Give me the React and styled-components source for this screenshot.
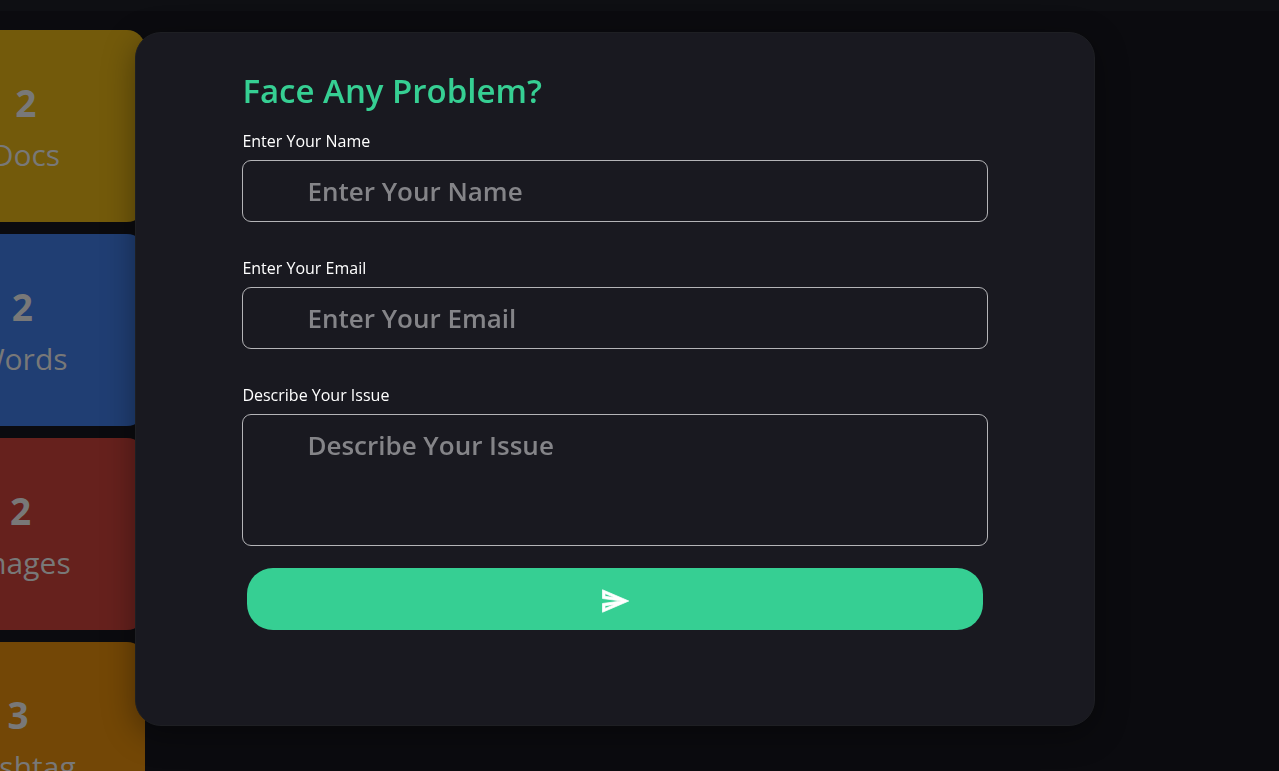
import React from "react";
import styled, { createGlobalStyle } from "styled-components";
import {
  MdOutlineDescription,
  MdOutlineTextFields,
  MdOutlineImage,
  MdOutlineTag,
} from "react-icons/md";

const GlobalStyle = createGlobalStyle`
  *, *::before, *::after { box-sizing: border-box; }
  body {
    margin: 0;
    background: #0b0b0f;
    font-family: "Segoe UI", "Open Sans", "Noto Sans", sans-serif;
    color: #ffffff;
  }
  h2, p { margin: 0; }
`;

const Dashboard = styled.div`
  height: 100vh;
  overflow: hidden;
`;

const TopBar = styled.header`
  height: 11px;
  background: #0e0f13;
`;

const CardList = styled.section`
  display: flex;
  flex-direction: column;
  gap: 12px;
  width: 400px;
  margin: 19px 0 0 -255px;
`;

const StatCard = styled.article`
  display: flex;
  align-items: center;
  justify-content: space-evenly;
  height: 192px;
  flex-shrink: 0;
  padding-top: 6px;
  border-radius: 18px;
  background: ${({ $color }) => $color};
  color: #787878;
  text-align: center;

  svg { flex-shrink: 0; }
`;

const StatValue = styled.p`
  font-size: 37px;
  font-weight: 700;
  line-height: 52px;
`;

const StatName = styled.p`
  font-size: 30px;
  line-height: 52px;
`;

const Overlay = styled.div`
  position: fixed;
  inset: 0;
  display: flex;
  justify-content: center;
  align-items: flex-start;
  padding: 32px 49px 0 0;
`;

const Modal = styled.div`
  width: 75vw;
  min-height: 90vh;
  padding: 34px 106px;
  border: 1px solid #1e1f23;
  border-radius: 26px;
  background: #191920;
  box-shadow: 0 8px 32px rgba(0, 0, 0, 0.37);
`;

const Title = styled.h2`
  margin-bottom: 14px;
  color: #36cf93;
  font-size: 33px;
  font-weight: 600;
  line-height: 48px;
`;

const Form = styled.form`
  display: flex;
  flex-direction: column;
`;

const Field = styled.div`
  display: flex;
  flex-direction: column;
  gap: 7px;
  margin-bottom: ${({ $last }) => ($last ? "22px" : "34px")};
`;

const Label = styled.label`
  font-size: 16px;
  line-height: 24px;
`;

const TextInput = styled.input`
  width: 100%;
  height: ${({ $height }) => $height || "62px"};
  padding: 10px 64px;
  border: 1px solid #b4b4b7;
  border-radius: 9px;
  outline: none;
  background: transparent;
  color: #ffffff;
  font-family: inherit;
  font-size: 26px;
  font-weight: 600;
  line-height: 40px;
  resize: none;

  &::placeholder {
    color: #848488;
    opacity: 1;
  }
`;

const SendButton = styled.button`
  display: flex;
  align-items: center;
  justify-content: center;
  height: 62px;
  margin: 0 5px;
  padding: 4px 0 0;
  border: 0;
  border-radius: 26px;
  background: #36cf93;
  color: #ffffff;
  cursor: pointer;
`;

const SendIcon = () => (
  <svg
    width="30"
    height="30"
    viewBox="0 0 24 24"
    fill="currentColor"
    stroke="currentColor"
    strokeWidth="0.6"
    aria-hidden="true"
  >
    <path d="M4.01 6.03l7.51 3.22-7.52-1 .01-2.22m7.5 8.72L4 17.97v-2.22l7.51-1M2.01 3L2 10l15 2-15 2 .01 7L23 12 2.01 3z" />
  </svg>
);

const stats = [
  { value: 2, name: "Docs", color: "#735a0b", Icon: MdOutlineDescription },
  { value: 2, name: "Words", color: "#203e73", Icon: MdOutlineTextFields },
  { value: 2, name: "Images", color: "#66211d", Icon: MdOutlineImage },
  { value: 3, name: "Hashtag", color: "#734706", Icon: MdOutlineTag },
];

export default function App() {
  return (
    <>
      <GlobalStyle />
      <Dashboard>
        <TopBar />
        <CardList>
          {stats.map(({ value, name, color, Icon }) => (
            <StatCard key={name} $color={color}>
              <Icon size={77} />
              <div>
                <StatValue>{value}</StatValue>
                <StatName>{name}</StatName>
              </div>
            </StatCard>
          ))}
        </CardList>
      </Dashboard>
      <Overlay>
        <Modal role="dialog" aria-labelledby="help-title">
          <Title id="help-title">Face Any Problem?</Title>
          <Form onSubmit={(event) => event.preventDefault()}>
            <Field>
              <Label htmlFor="name">Enter Your Name</Label>
              <TextInput id="name" type="text" placeholder="Enter Your Name" />
            </Field>
            <Field>
              <Label htmlFor="email">Enter Your Email</Label>
              <TextInput id="email" type="email" placeholder="Enter Your Email" />
            </Field>
            <Field $last>
              <Label htmlFor="issue">Describe Your Issue</Label>
              <TextInput as="textarea" id="issue" $height="132px" placeholder="Describe Your Issue" />
            </Field>
            <SendButton type="submit" aria-label="Send">
              <SendIcon />
            </SendButton>
          </Form>
        </Modal>
      </Overlay>
    </>
  );
}
